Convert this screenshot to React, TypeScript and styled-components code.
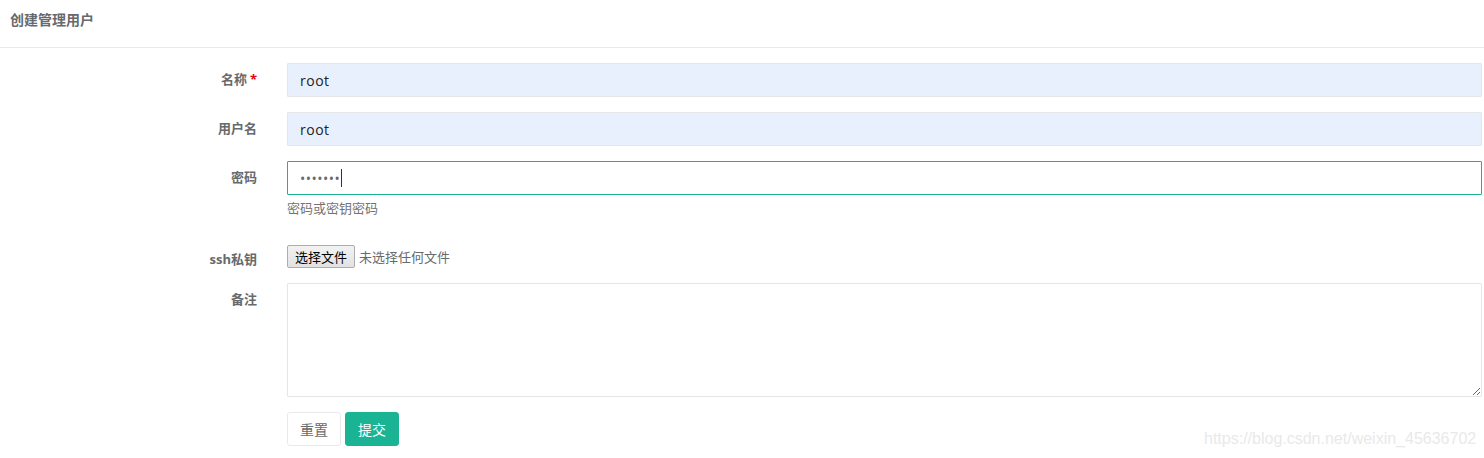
import React from "react";
import styled, { createGlobalStyle } from "styled-components";

const GlobalStyle = createGlobalStyle`
  html, body { margin: 0; padding: 0; background: #ffffff; }
  body {
    font-family: "Open Sans", "Noto Sans CJK SC", sans-serif;
    font-size: 13px;
    color: #676a6c;
  }
  * { box-sizing: border-box; }
`;

const Page = styled.div`
  position: relative;
  width: 1484px;
  height: 458px;
  overflow: hidden;
`;

const Header = styled.div`
  height: 48px;
  border-bottom: 1px solid #e7eaec;
  padding: 10px 10px 0;
`;

const Title = styled.h5`
  margin: 0;
  font-size: 14px;
  line-height: 20px;
  font-weight: 700;
  color: #676a6c;
`;

const Form = styled.form`
  display: grid;
  grid-template-columns: 257px 1fr;
  column-gap: 30px;
  padding: 15px 2px 0 0;
`;

const Label = styled.label`
  display: block;
  text-align: right;
  font-weight: 700;
  font-size: 13px;
  line-height: 18px;
  color: #676a6c;
  padding-top: 7px;
`;

const Required = styled.span`
  color: #e60012;
  margin-left: 3px;
`;

const Field = styled.div<{ $gap?: number }>`
  margin-bottom: ${(p) => p.$gap ?? 15}px;
`;

const LabelCell = styled.div<{ $gap?: number }>`
  margin-bottom: ${(p) => p.$gap ?? 15}px;
`;

const TextInput = styled.input<{ $autofill?: boolean; $focused?: boolean }>`
  display: block;
  width: 100%;
  height: 34px;
  padding: 6px 12px;
  font-family: "Open Sans", "Noto Sans CJK SC", sans-serif;
  font-size: 14px;
  color: ${(p) => (p.$focused ? "#676a6c" : "#222222")};
  background: ${(p) => (p.$autofill ? "#e8f0fe" : "#ffffff")};
  border: 1px solid ${(p) => (p.$focused ? "#1ab394" : "#e5e6e7")};
  border-radius: 1px;
  outline: none;
  letter-spacing: 0.5px;
`;

const PasswordWrap = styled.div`
  position: relative;
`;

const Caret = styled.span`
  position: absolute;
  left: 54px;
  top: 8px;
  width: 1px;
  height: 18px;
  background: #333333;
`;

const Help = styled.span`
  display: block;
  margin-top: 4px;
  font-size: 13px;
  line-height: 18px;
  color: #737373;
`;

const FileRow = styled.div`
  display: flex;
  align-items: center;
  gap: 4px;
  padding-top: 2px;
`;

const FileButton = styled.button`
  height: 23px;
  width: 68px;
  padding: 0 6px;
  font-family: "Noto Sans CJK SC", sans-serif;
  font-size: 13px;
  color: #000000;
  background: linear-gradient(#f2f2f2, #e2e2e2);
  border: 1px solid #adadad;
  border-radius: 2px;
`;

const FileName = styled.span`
  font-size: 13px;
  color: #676a6c;
`;

const TextArea = styled.textarea`
  display: block;
  width: 100%;
  height: 114px;
  border: 1px solid #e5e6e7;
  border-radius: 1px;
  outline: none;
  resize: vertical;
  font-family: "Open Sans", sans-serif;
`;

const Buttons = styled.div`
  display: flex;
  gap: 4px;
`;

const Button = styled.button<{ $primary?: boolean }>`
  height: 34px;
  width: 54px;
  font-family: "Noto Sans CJK SC", sans-serif;
  font-size: 14px;
  border-radius: 3px;
  border: 1px solid ${(p) => (p.$primary ? "#1ab394" : "#e7eaec")};
  background: ${(p) => (p.$primary ? "#1ab394" : "#ffffff")};
  color: ${(p) => (p.$primary ? "#ffffff" : "#676a6c")};
`;

const Watermark = styled.div`
  position: absolute;
  left: 1204px;
  top: 429px;
  font-family: "Liberation Sans", Arial, sans-serif;
  font-size: 16px;
  line-height: 20px;
  color: #e9e9e9;
  white-space: nowrap;
`;

export default function App() {
  return (
    <Page>
      <GlobalStyle />
      <Header>
        <Title>创建管理用户</Title>
      </Header>
      <Form onSubmit={(e) => e.preventDefault()}>
        <LabelCell>
          <Label>
            名称<Required>*</Required>
          </Label>
        </LabelCell>
        <Field>
          <TextInput $autofill defaultValue="root" />
        </Field>

        <LabelCell>
          <Label>用户名</Label>
        </LabelCell>
        <Field>
          <TextInput $autofill defaultValue="root" />
        </Field>

        <LabelCell $gap={26}>
          <Label>密码</Label>
        </LabelCell>
        <Field $gap={26}>
          <PasswordWrap>
            <TextInput $focused type="password" defaultValue="1234567" />
            <Caret />
          </PasswordWrap>
          <Help>密码或密钥密码</Help>
        </Field>

        <LabelCell>
          <Label>ssh私钥</Label>
        </LabelCell>
        <Field>
          <FileRow>
            <FileButton type="button">选择文件</FileButton>
            <FileName>未选择任何文件</FileName>
          </FileRow>
        </Field>

        <LabelCell>
          <Label>备注</Label>
        </LabelCell>
        <Field>
          <TextArea />
        </Field>

        <div />
        <Buttons>
          <Button type="button">重置</Button>
          <Button type="submit" $primary>
            提交
          </Button>
        </Buttons>
      </Form>
      <Watermark>https://blog.csdn.net/weixin_45636702</Watermark>
    </Page>
  );
}
